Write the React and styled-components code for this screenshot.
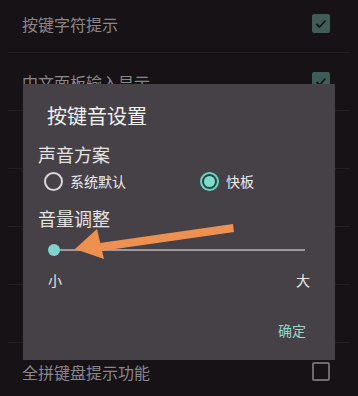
import { createGlobalStyle, styled } from "styled-components"

const GlobalStyle = createGlobalStyle`
    html, body {
        margin: 0;
        padding: 0;
        background: #161216;
        font-family: "Noto Sans CJK SC", "Noto Sans", sans-serif;
    }
`

const Page = styled.div`
    position: relative;
    width: 358px;
    height: 396px;
    overflow: hidden;
    background: #161216;
`

const SettingRow = styled.div`
    height: 58px;
    display: flex;
    align-items: center;
    justify-content: space-between;
    padding: 0 20px 0 14px;
    box-sizing: border-box;
    border-bottom: 1px solid #241f24;
    margin: -5px 8px 5px 8px;
`

const RowLabel = styled.span`
    font-size: 16px;
    color: #8c878b;
`

const Checkbox = styled.div`
    width: 18px;
    height: 19px;
    box-sizing: border-box;
    border-radius: 2px;
    display: flex;
    align-items: center;
    justify-content: center;
    background: ${(p) => (p.checked ? "#3f5c59" : "transparent")};
    border: ${(p) => (p.checked ? "none" : "2px solid #6f6a6e")};
`

const Dialog = styled.div`
    position: absolute;
    left: 23px;
    top: 84px;
    width: 312px;
    height: 276px;
    background: #464146;
    box-sizing: border-box;
    padding: 18px 15px 0 15px;
    display: flex;
    flex-direction: column;
`

const Title = styled.div`
    font-size: 20px;
    color: #f2f2f2;
    padding-left: 9px;
    line-height: 28px;
`

const Section = styled.div`
    font-size: 18px;
    color: #e4e4e4;
    line-height: 24px;
    margin-top: ${(p) => p.$top}px;
`

const RadioGroup = styled.div`
    display: flex;
    align-items: center;
    margin-top: 5px;
    padding-left: 6px;
`

const RadioOption = styled.div`
    display: flex;
    align-items: center;
    gap: 7px;
    width: ${(p) => p.$width}px;
`

const RadioCircle = styled.span`
    width: 19px;
    height: 19px;
    box-sizing: border-box;
    border-radius: 50%;
    border: 2px solid ${(p) => (p.$on ? "#6fcfc2" : "#d8d8d8")};
    display: flex;
    align-items: center;
    justify-content: center;
    background: ${(p) => (p.$on ? "#1f4a46" : "transparent")};
    &::after {
        content: "";
        width: 11px;
        height: 11px;
        border-radius: 50%;
        background: ${(p) => (p.$on ? "#82d8cb" : "transparent")};
    }
`

const RadioText = styled.span`
    font-size: 14px;
    color: #ececec;
`

const SliderTrack = styled.div`
    position: relative;
    height: 2px;
    background: #9d999c;
    margin: 19px 15px 0 16px;
`

const SliderThumb = styled.div`
    position: absolute;
    left: -6px;
    top: -5px;
    width: 12px;
    height: 12px;
    border-radius: 50%;
    background: #80d4cc;
`

const SliderLabels = styled.div`
    display: flex;
    justify-content: space-between;
    font-size: 14px;
    color: #e6e6e6;
    margin-top: 19px;
    padding: 0 10px 0 10px;
`

const Actions = styled.div`
    display: flex;
    justify-content: flex-end;
    margin-top: 30px;
    padding-right: 14px;
`

const ConfirmButton = styled.span`
    font-size: 14px;
    color: #9ad7cf;
`

const ArrowLayer = styled.svg`
    position: absolute;
    left: 0;
    top: 0;
`

const rows = [
    { label: "按键字符提示", checked: true },
    { label: "中文面板输入显示", checked: true },
    { label: "", checked: true },
    { label: "", checked: true },
    { label: "", checked: true },
    { label: "", checked: true },
    { label: "全拼键盘提示功能", checked: false },
]

export default function App() {
    return (
        <>
            <GlobalStyle />
            <Page>
                {rows.map((r, i) => (
                    <SettingRow key={i}>
                        <RowLabel>{r.label}</RowLabel>
                        <Checkbox checked={r.checked}>
                            {r.checked && (
                                <svg width="12" height="10" viewBox="0 0 12 10">
                                    <path d="M1.5 5 L4.5 8 L10.5 1.5" fill="none" stroke="#151515" strokeWidth="1.8" />
                                </svg>
                            )}
                        </Checkbox>
                    </SettingRow>
                ))}
                <Dialog>
                    <Title>按键音设置</Title>
                    <Section $top={12}>声音方案</Section>
                    <RadioGroup>
                        <RadioOption $width={156}>
                            <RadioCircle />
                            <RadioText>系统默认</RadioText>
                        </RadioOption>
                        <RadioOption>
                            <RadioCircle $on />
                            <RadioText>快板</RadioText>
                        </RadioOption>
                    </RadioGroup>
                    <Section $top={15}>音量调整</Section>
                    <SliderTrack>
                        <SliderThumb />
                    </SliderTrack>
                    <SliderLabels>
                        <span>小</span>
                        <span>大</span>
                    </SliderLabels>
                    <Actions>
                        <ConfirmButton>确定</ConfirmButton>
                    </Actions>
                </Dialog>
                <ArrowLayer width="358" height="396" viewBox="0 0 358 396">
                    <polygon points="233,224 234,232 101,251 100,243" fill="#ee9150" />
                    <polygon points="75,249 97,229 104,259" fill="#ee9150" />
                </ArrowLayer>
            </Page>
        </>
    )
}
